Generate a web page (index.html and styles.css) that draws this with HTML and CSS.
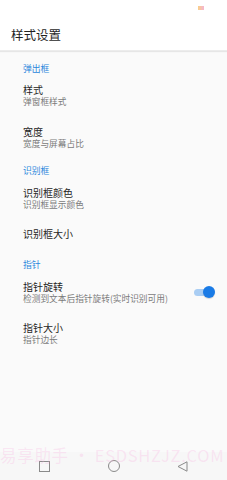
FILE: index.html
```html
<!DOCTYPE html>
<html lang="zh">
<head>
<meta charset="utf-8">
<link rel="stylesheet" href="styles.css">
</head>
<body>
<div class="screen">
  <div class="status"><span class="status-icon"></span></div>
  <div class="toolbar"><span class="toolbar-title">样式设置</span></div>
  <div class="list">
    <div class="category">弹出框</div>
    <div class="item">
      <div class="texts"><div class="title">样式</div><div class="summary">弹窗框样式</div></div>
    </div>
    <div class="item">
      <div class="texts"><div class="title">宽度</div><div class="summary">宽度与屏幕占比</div></div>
    </div>
    <div class="category">识别框</div>
    <div class="item">
      <div class="texts"><div class="title">识别框颜色</div><div class="summary">识别框显示颜色</div></div>
    </div>
    <div class="item single">
      <div class="texts"><div class="title">识别框大小</div></div>
    </div>
    <div class="category">指针</div>
    <div class="item">
      <div class="texts"><div class="title">指针旋转</div><div class="summary">检测到文本后指针旋转(实时识别可用)</div></div>
      <div class="switch"><span class="track"></span><span class="thumb"></span></div>
    </div>
    <div class="item">
      <div class="texts"><div class="title">指针大小</div><div class="summary">指针边长</div></div>
    </div>
  </div>
  <div class="navbar">
    <svg class="nav-icon" width="11" height="11" viewBox="0 0 11 11"><rect x="0.5" y="0.5" width="10" height="10" fill="none" stroke="#8a8a8a" stroke-width="1"/></svg>
    <svg class="nav-icon" width="12" height="12" viewBox="0 0 12 12"><circle cx="6" cy="6" r="5.5" fill="none" stroke="#8a8a8a" stroke-width="1"/></svg>
    <svg class="nav-icon" width="11" height="11" viewBox="0 0 11 11"><path d="M10 0.8 L1 5.5 L10 10.2 Z" fill="none" stroke="#8a8a8a" stroke-width="1" stroke-linejoin="round"/></svg>
  </div>
  <div class="watermark">易享助手 • ESDSHZJZ.COM</div>
</div>
</body>
</html>
```
FILE: styles.css
```css
* { box-sizing: border-box; }
html, body { margin: 0; padding: 0; }
body {
  font-family: "Noto Sans CJK SC", "Noto Sans", sans-serif;
  background: #fafafa;
}
.screen {
  position: relative;
  width: 227px;
  height: 480px;
  display: flex;
  flex-direction: column;
  overflow: hidden;
  background: #fafafa;
}
.status {
  height: 22px;
  background: #ffffff;
  display: flex;
  justify-content: flex-end;
  align-items: flex-start;
  padding: 6px 23px 0 0;
}
.status-icon {
  width: 6px;
  height: 4px;
  background: linear-gradient(90deg, #f7c46a, #f2a2c8);
  opacity: 0.8;
}
.toolbar {
  height: 29px;
  background: #ffffff;
  display: flex;
  align-items: center;
  padding: 0 0 3px 11px;
  box-shadow: 0 1px 1px rgba(0,0,0,0.08);
  border-bottom: 1px solid #ececec;
  position: relative;
  z-index: 1;
}
.toolbar-title {
  font-size: 12.5px;
  line-height: 16px;
  color: #1f1f1f;
}
.list {
  flex: 1;
  padding-top: 6px;
  display: flex;
  flex-direction: column;
}
.category {
  padding: 6px 0 1px 23px;
  font-size: 8.8px;
  line-height: 12px;
  color: #2b87dc;
}
.item {
  display: flex;
  align-items: center;
  padding: 7.4px 12px 9.8px 23px;
}
.item.single { padding-bottom: 12.8px; }
.texts { flex: 1; display: flex; flex-direction: column; }
.title {
  font-size: 10px;
  line-height: 13px;
  color: #1f1f1f;
}
.summary {
  font-size: 8.7px;
  line-height: 11.5px;
  color: #7a7a7a;
}
.switch {
  position: relative;
  width: 21px;
  height: 12px;
  flex: none;
}
.track {
  position: absolute;
  left: 0;
  top: 3px;
  width: 19px;
  height: 7px;
  border-radius: 4px;
  background: #a9cdf3;
}
.thumb {
  position: absolute;
  right: 0;
  top: 0;
  width: 12px;
  height: 12px;
  border-radius: 50%;
  background: #1a7be6;
  box-shadow: 0 1px 1px rgba(0,0,0,0.15);
}
.navbar {
  height: 28px;
  background: #f7f7f7;
  display: flex;
  align-items: center;
  justify-content: space-between;
  padding: 0 39px 0 39px;
}
.navbar .nav-icon { display: block; }
.watermark {
  position: absolute;
  left: 0;
  top: 445px;
  font-size: 16.5px;
  line-height: 20px;
  letter-spacing: 0.7px;
  white-space: nowrap;
  color: rgba(248, 170, 220, 0.26);
  pointer-events: none;
}
```
